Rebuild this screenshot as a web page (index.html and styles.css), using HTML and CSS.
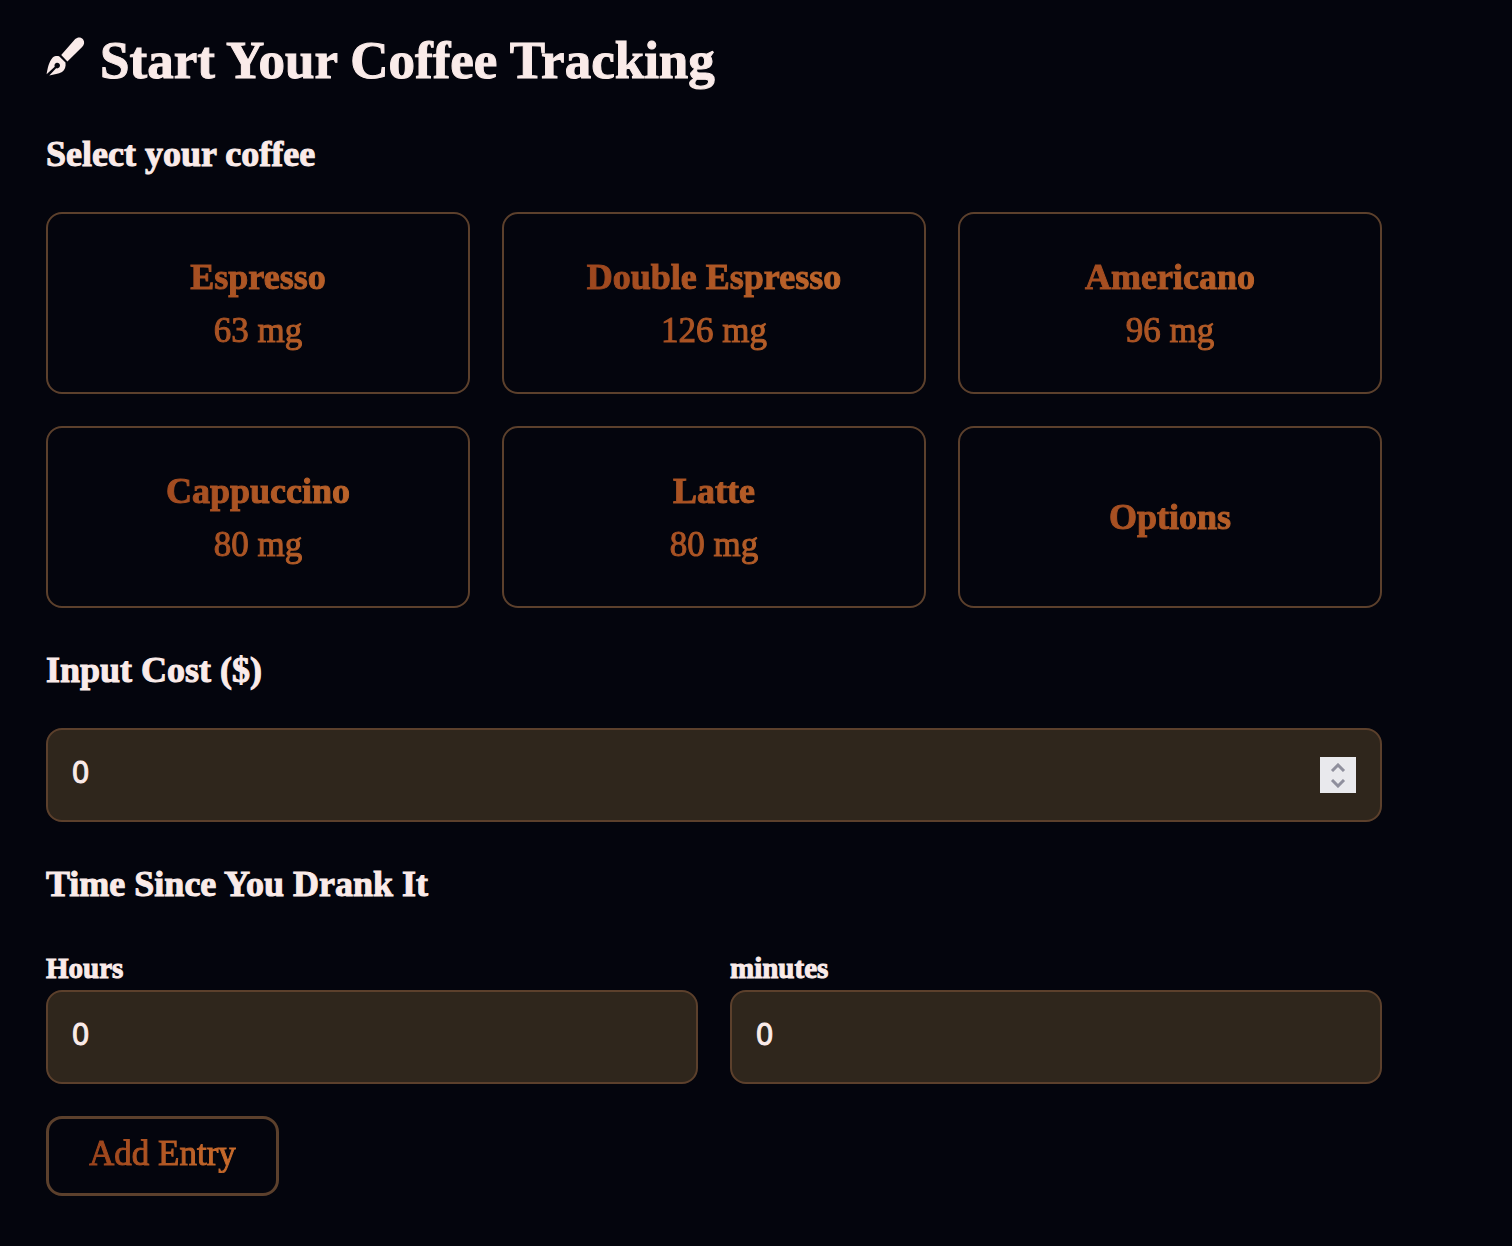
FILE: index.html
```html
<!DOCTYPE html>
<html lang="en">
<head>
<meta charset="utf-8">
<meta name="viewport" content="width=device-width, initial-scale=1">
<title>Start Your Coffee Tracking</title>
<link rel="stylesheet" href="styles.css">
</head>
<body>
<main class="page">
  <header class="page-header">
    <svg class="pen-icon" viewBox="0 0 40 40" aria-hidden="true">
      <path fill="currentColor" d="M15.200 18 29.200 2C31.500-.2 35-.2 37 2.300c1.900 2.400 1.400 5.500-.9 7.700L21.400 24.400Z"/>
      <path fill="currentColor" d="M6.700 20.400C8.500 19.200 11 18.800 13.400 19.400L19.500 25.400C20 29.600 19 32.900 16 35 12.500 36.800 8 37.600 3.300 38.600L10.100 31.300C12.200 31.900 14 30.500 14 28.600 14 26.700 12.500 25.500 10.800 25.700 8.900 26 8 27.800 8.700 29.700L.6 37.200C1.600 31 3 24.500 6.700 20.400Z"/>
    </svg>
    <h1 class="title">Start Your Coffee Tracking</h1>
  </header>
  <form class="entry-form">
    <section class="group">
      <h2 class="heading">Select your coffee</h2>
      <div class="coffee-grid">
        <button type="button" class="card"><span class="card-label"><strong class="name">Espresso</strong><span class="amount">63 mg</span></span></button>
        <button type="button" class="card"><span class="card-label"><strong class="name">Double Espresso</strong><span class="amount">126 mg</span></span></button>
        <button type="button" class="card"><span class="card-label"><strong class="name">Americano</strong><span class="amount">96 mg</span></span></button>
        <button type="button" class="card"><span class="card-label"><strong class="name">Cappuccino</strong><span class="amount">80 mg</span></span></button>
        <button type="button" class="card"><span class="card-label"><strong class="name">Latte</strong><span class="amount">80 mg</span></span></button>
        <button type="button" class="card"><span class="card-label"><strong class="name">Options</strong></span></button>
      </div>
    </section>
    <section class="group">
      <h2 class="heading"><label for="cost">Input Cost ($)</label></h2>
      <div class="cost-field">
        <input class="field" id="cost" type="number" value="0" min="0">
        <div class="stepper">
          <button type="button" class="step" aria-label="Increase cost"><svg class="chevron" viewBox="0 0 16 9"><path d="M2 8 8 2 14 8"/></svg></button>
          <button type="button" class="step" aria-label="Decrease cost"><svg class="chevron" viewBox="0 0 16 9"><path d="M2 1 8 7 14 1"/></svg></button>
        </div>
      </div>
    </section>
    <section class="group">
      <h2 class="heading">Time Since You Drank It</h2>
      <div class="time-grid">
        <div class="time-item">
          <label class="time-label" for="hours">Hours</label>
          <select class="field" id="hours"><option>0</option><option>1</option><option>2</option><option>3</option></select>
        </div>
        <div class="time-item">
          <label class="time-label" for="minutes">minutes</label>
          <select class="field" id="minutes"><option>0</option><option>15</option><option>30</option><option>45</option></select>
        </div>
      </div>
    </section>
    <button type="button" class="submit"><span class="submit-label">Add Entry</span></button>
  </form>
</main>
</body>
</html>
```
FILE: styles.css
```css
* {
  box-sizing: border-box;
}

body {
  margin: 0;
  min-height: 100vh;
  background: #04050d;
  color: #faebe9;
  font-family: "Liberation Serif", serif;
  -webkit-text-stroke: 1px;
}

h1,
h2 {
  margin: 0;
}

button,
input,
select {
  font: inherit;
  margin: 0;
}

.page {
  padding: 28px 130px 50px 46px;
}

.page-header {
  display: flex;
  align-items: center;
  gap: 14px;
  margin-bottom: 38px;
}

.pen-icon {
  width: 40px;
  height: 40px;
  margin-bottom: 6px;
  overflow: visible;
}

.title {
  font-size: 53px;
  line-height: 64px;
}

.entry-form {
  display: flex;
  flex-direction: column;
}

.group {
  margin-bottom: 38px;
}

.group:last-of-type {
  margin-bottom: 32px;
}

.heading {
  margin-bottom: 34px;
  font-size: 36px;
  line-height: 48px;
}

.coffee-grid {
  display: grid;
  grid-template-columns: repeat(3, 1fr);
  gap: 32px;
}

.card {
  min-height: 182px;
  padding: 0;
  border: 2px solid #5c402c;
  border-radius: 16px;
  background: transparent;
  cursor: pointer;
}

.card-label,
.submit-label {
  background: linear-gradient(90deg, #923c1a, #cb7230);
  -webkit-background-clip: text;
  background-clip: text;
  color: transparent;
}

.card-label {
  display: flex;
  flex-direction: column;
  gap: 4px;
}

.name {
  font-size: 36px;
  line-height: 52px;
}

.amount {
  font-size: 35px;
  line-height: 48px;
}

.field {
  display: block;
  width: 100%;
  height: 94px;
  padding: 0 24px 8px;
  border: 2px solid #5c402c;
  border-radius: 16px;
  background: #2f261c;
  color: #faebe9;
  font-family: "Noto Sans", sans-serif;
  font-size: 30px;
  appearance: none;
  -moz-appearance: textfield;
}

.field::-webkit-inner-spin-button {
  display: none;
}

.cost-field {
  position: relative;
}

.stepper {
  position: absolute;
  top: 29px;
  right: 26px;
  display: flex;
  flex-direction: column;
  width: 36px;
  height: 36px;
  padding: 2px 0;
  background: #e9e9ed;
}

.step {
  display: flex;
  flex: 1;
  align-items: center;
  justify-content: center;
  padding: 0;
  border: 0;
  background: transparent;
}

.chevron {
  width: 16px;
  height: 9px;
  fill: none;
  stroke: #8f8f9d;
  stroke-width: 3;
}

.time-grid {
  display: grid;
  grid-template-columns: repeat(2, 1fr);
  gap: 32px;
}

.time-label {
  display: block;
  padding-top: 4px;
  font-size: 29px;
  font-weight: bold;
  line-height: 44px;
}

.submit {
  align-self: flex-start;
  height: 80px;
  padding: 0 40px 4px;
  border: 3px solid #5c402c;
  border-radius: 16px;
  background: transparent;
  font-size: 35px;
  cursor: pointer;
}

.submit-label {
  background-image: linear-gradient(90deg, #9a431c, #c96c2c);
}
```
